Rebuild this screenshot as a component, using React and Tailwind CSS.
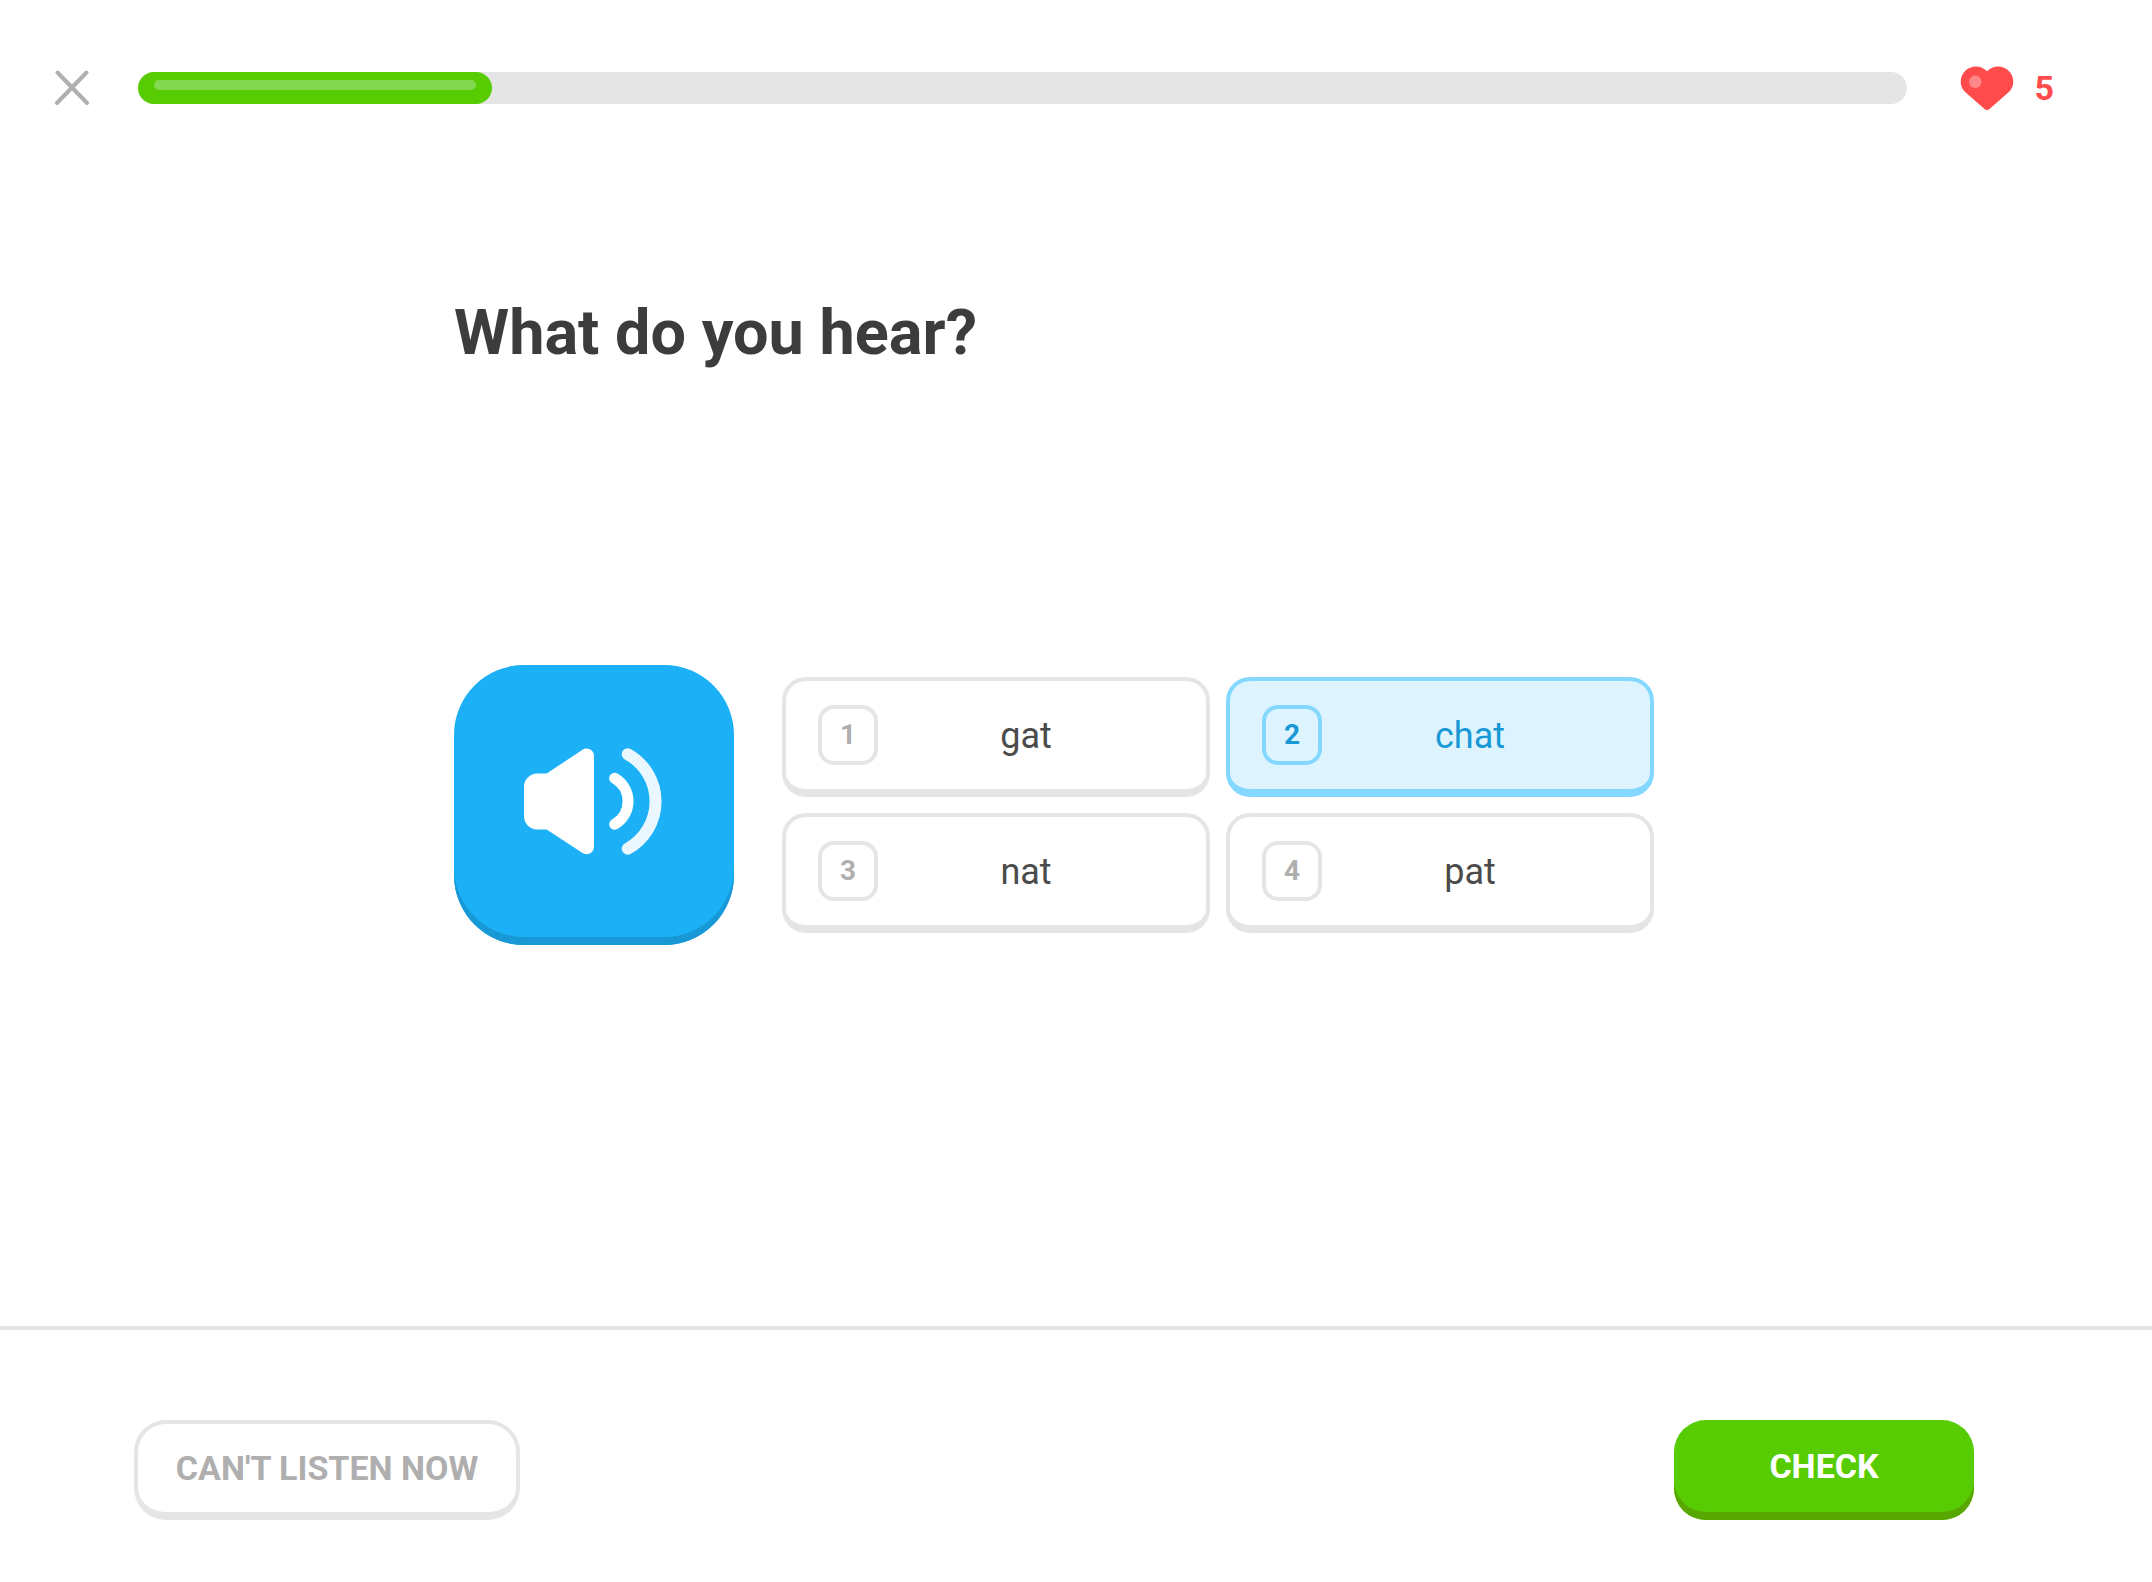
import React, { useState } from 'react';
import clsx from 'clsx';

const CHOICES = ['gat', 'chat', 'nat', 'pat'];

const CloseIcon = () => (
  <svg viewBox="0 0 36 36" className="w-9 h-9" fill="none" stroke="#afafaf" strokeWidth="4" strokeLinecap="round">
    <path d="M3.5 2.5 33 33M32.5 2.5 3 33" />
  </svg>
);

const HeartIcon = () => (
  <svg viewBox="0 0 54 44" className="w-[54px] h-11 shrink-0">
    <path
      fill="#ff4b4b"
      d="M27 5.200C24 2 20 .4 16 .4C7.500 .4 .7 7.200 .7 15.700C.7 20.200 2.600 23.800 6 26.800L24.500 42.900C26 44.200 28 44.200 29.500 42.900L48 26.800C51.400 23.800 53.300 20.200 53.300 15.700C53.300 7.200 46.500 .4 38 .4C34 .4 30 2 27 5.200Z"
    />
    <circle cx="15.300" cy="15.800" r="6.200" fill="#ff8787" />
  </svg>
);

const SpeakerIcon = () => (
  <svg viewBox="0 0 140 110" className="w-[140px] h-[110px]" fill="none" strokeLinecap="round">
    <path
      fill="#fff"
      d="M13.500 27.500H22.700L58.500 3.700C63.500 .7 70 3.900 70 10V100.800C70 106.900 63.500 110.100 58.500 107.100L22.700 83.500H13.500C6 83.500 0 77.500 0 70.500V40.500C0 33.500 6 27.500 13.500 27.500Z"
    />
    <path stroke="#fff" strokeWidth="11" d="M90.700 32.200A26.500 26.500 0 0 1 90.700 78.200" />
    <path stroke="#ebf7fe" strokeWidth="12" d="M103.700 8.200A54 54 0 0 1 103.700 102.700" />
  </svg>
);

const Choice = ({ number, label, selected, onSelect }) => (
  <button
    type="button"
    aria-pressed={selected}
    onClick={onSelect}
    className={clsx(
      'flex items-center h-[120px] px-8 rounded-3xl border-4 border-b-8',
      selected ? 'bg-[#ddf4ff] border-[#84d8ff] text-[#1899d6]' : 'bg-white border-[#e5e5e5] text-[#4b4b4b]'
    )}
  >
    <span
      className={clsx(
        'flex items-center justify-center w-[60px] h-[60px] rounded-2xl border-4 text-[28px] font-bold',
        selected ? 'border-[#84d8ff]' : 'border-[#e5e5e5] text-[#afafaf]'
      )}
    >
      {number}
    </span>
    <span className="flex-1 pt-0.5 text-center text-[36px] leading-[48px]">{label}</span>
  </button>
);

const App = () => {
  const [selected, setSelected] = useState(1);
  const [progress] = useState(20);

  return (
    <div className="flex flex-col min-h-screen bg-white font-['Roboto',sans-serif] text-[#3c3c3c]">
      {/* Progress header */}
      <header className="flex items-center pt-16 pl-[54px] pr-[98px]">
        <button type="button" aria-label="Close">
          <CloseIcon />
        </button>
        <div
          role="progressbar"
          aria-label="Lesson progress"
          aria-valuenow={progress}
          className="flex-1 h-8 ml-12 mr-[53px] rounded-full bg-[#e5e5e5]"
        >
          <div className="h-8 px-4 pt-2 rounded-full bg-[#58cc02]" style={{ width: `${progress}%` }}>
            <div className="h-[10px] rounded-full bg-[#82d950]" />
          </div>
        </div>
        <div className="flex items-center gap-5 text-[34px] leading-[48px] font-bold text-[#ff4b4b]">
          <HeartIcon />
          <span>5</span>
        </div>
      </header>

      {/* Challenge */}
      <main className="flex-1 flex flex-col pr-11">
        <div className="flex-1 flex flex-col w-full max-w-[1200px] mx-auto pt-[181px] pb-[89px]">
          <h1 className="text-[63px] leading-[80px] font-bold">What do you hear?</h1>
          <div className="flex-1 flex items-center gap-12">
            <button
              type="button"
              aria-label="Play audio"
              className="flex items-center justify-center shrink-0 w-[280px] h-[280px] pb-2 rounded-[70px] bg-[#1cb0f6] shadow-[inset_0_-8px_0_#1899d6]"
            >
              <SpeakerIcon />
            </button>
            <div className="flex-1 grid grid-cols-2 gap-4">
              {CHOICES.map((label, index) => (
                <Choice
                  key={label}
                  number={index + 1}
                  label={label}
                  selected={selected === index}
                  onSelect={() => setSelected(index)}
                />
              ))}
            </div>
          </div>
        </div>
      </main>

      {/* Footer actions */}
      <footer className="flex items-start justify-between pt-[90px] pb-[62px] pl-[134px] pr-[178px] border-t-4 border-[#e5e5e5] text-[34px] leading-[48px] font-bold uppercase">
        <button
          type="button"
          className="h-[100px] w-[386px] rounded-[32px] border-4 border-b-8 border-[#e5e5e5] uppercase text-[#afafaf]"
        >
          Can't listen now
        </button>
        <button
          type="button"
          className="h-[100px] w-[300px] pb-2 rounded-[32px] bg-[#58cc02] uppercase text-white shadow-[inset_0_-8px_0_#58a700]"
        >
          Check
        </button>
      </footer>
    </div>
  );
};

export default App;
